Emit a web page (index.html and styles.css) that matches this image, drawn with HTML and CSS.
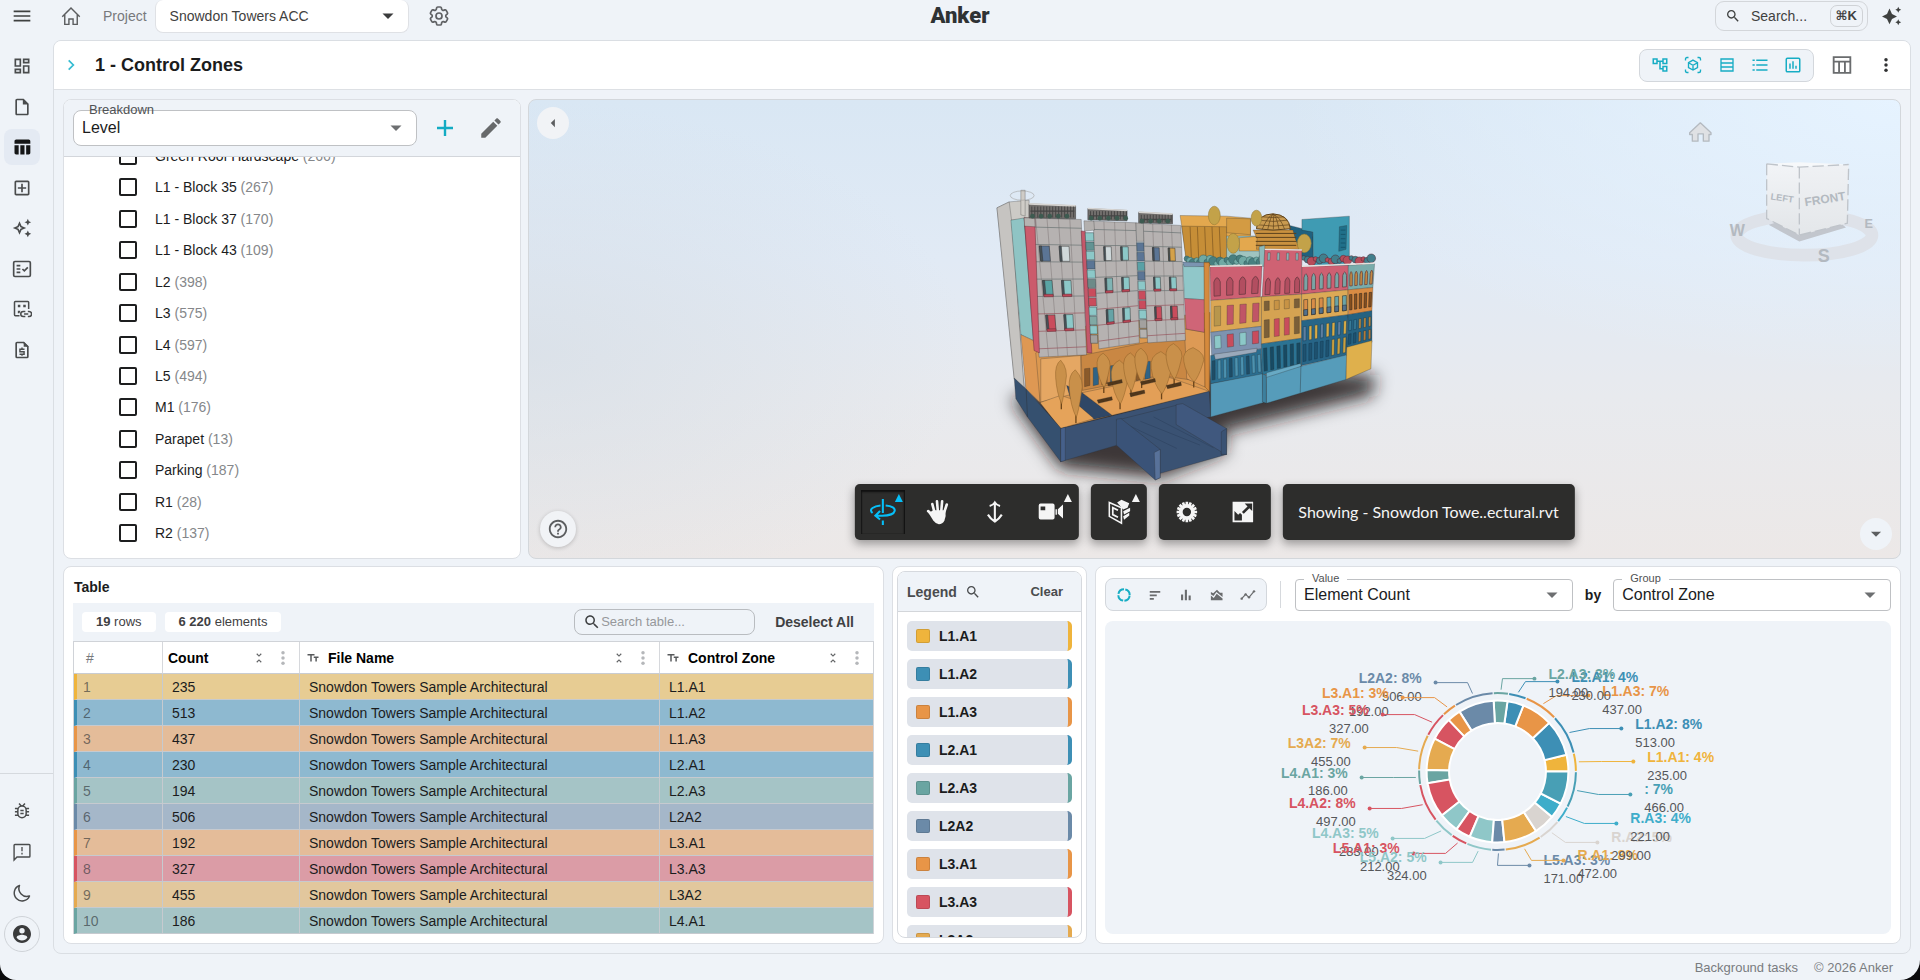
FILE: index.html
```html
<!DOCTYPE html>
<html lang="en">
<head>
<meta charset="utf-8">
<meta name="viewport" content="width=device-width, initial-scale=1">
<title>Anker - Control Zones</title>
<link rel="stylesheet" href="styles.css">
</head>
<body>
<svg class="sprite" aria-hidden="true">
  <symbol id="i-menu" viewBox="0 0 24 24"><path d="M2 18.500h20v-2H2zm0-5.500h20v-2H2zm0-7.500v2h20v-2z"/></symbol>
  <symbol id="i-home" viewBox="0 0 24 24"><path fill="none" stroke="currentColor" stroke-width="1.700" d="M1.500 13L12 2.500 22.500 13M4.500 10.500V22h5v-6.500h5V22h5V10.500"/></symbol>
  <symbol id="i-gear" viewBox="0 0 24 24"><g fill="none" stroke="currentColor" stroke-width="1.700"><path d="M9.594 3.940c.09-.542.56-.94 1.110-.94h2.593c.55 0 1.020.398 1.110.94l.213 1.281c.063.374.313.686.645.87.074.04.147.083.22.127.325.196.72.257 1.075.124l1.217-.456a1.125 1.125 0 0 1 1.370.49l1.296 2.247a1.125 1.125 0 0 1-.26 1.431l-1.003.827c-.293.241-.438.613-.43.992a7.723 7.723 0 0 1 0 .255c-.008.378.137.75.43.991l1.004.827c.424.35.534.955.26 1.430l-1.298 2.247a1.125 1.125 0 0 1-1.369.491l-1.217-.456c-.355-.133-.75-.072-1.076.124a6.470 6.470 0 0 1-.22.128c-.331.183-.581.495-.644.869l-.213 1.281c-.09.543-.56.94-1.110.94h-2.594c-.55 0-1.019-.398-1.110-.94l-.213-1.281c-.062-.374-.312-.686-.644-.87a6.520 6.520 0 0 1-.22-.127c-.325-.196-.72-.257-1.076-.124l-1.217.456a1.125 1.125 0 0 1-1.369-.49l-1.297-2.247a1.125 1.125 0 0 1 .26-1.431l1.004-.827c.292-.24.437-.613.43-.991a6.932 6.932 0 0 1 0-.255c.007-.38-.138-.751-.43-.992l-1.004-.827a1.125 1.125 0 0 1-.26-1.430l1.297-2.247a1.125 1.125 0 0 1 1.370-.491l1.216.456c.356.133.751.072 1.076-.124.072-.044.146-.086.22-.128.332-.183.582-.495.644-.869l.214-1.280Z"/><circle cx="12" cy="12" r="3"/></g></symbol>
  <symbol id="i-dash" viewBox="0 0 24 24"><path d="M19 5v2h-4V5h4M9 5v6H5V5h4m10 8v6h-4v-6h4M9 17v2H5v-2h4M21 3h-8v6h8V3zM11 3H3v10h8V3zm10 8h-8v10h8V11zm-10 4H3v6h8v-6z"/></symbol>
  <symbol id="i-file" viewBox="0 0 24 24"><path d="M14 2H6c-1.100 0-2 .9-2 2v16c0 1.100.9 2 2 2h12c1.100 0 2-.9 2-2V8l-6-6zM6 20V4h7v5h5v11H6z"/></symbol>
  <symbol id="i-table" viewBox="0 0 24 24"><path d="M10 10h5v11h-5zM17 21h3c1.100 0 2-.9 2-2v-9h-5v11zm3-18H5c-1.100 0-2 .9-2 2v3h19V5c0-1.100-.9-2-2-2zM3 19c0 1.100.9 2 2 2h3V10H3v9z"/></symbol>
  <symbol id="i-addbox" viewBox="0 0 24 24"><path d="M19 3H5c-1.100 0-2 .9-2 2v14c0 1.100.9 2 2 2h14c1.100 0 2-.9 2-2V5c0-1.100-.9-2-2-2zm0 16H5V5h14v14zm-8-2h2v-4h4v-2h-4V7h-2v4H7v2h4z"/></symbol>
  <symbol id="i-spark-o" viewBox="0 0 24 24"><path fill-rule="evenodd" d="M19 9l1.250-2.750L23 5l-2.750-1.250L19 1l-1.250 2.750L15 5l2.750 1.250zm-7.500.5L9 4 6.500 9.500 1 12l5.500 2.500L9 20l2.500-5.500L17 12zM10 13l-1 2.200L8 13l-2.200-1L8 11l1-2.200 1 2.200 2.200 1zM19 15l-1.250 2.750L15 19l2.750 1.250L19 23l1.250-2.750L23 19l-2.750-1.250z"/></symbol>
  <symbol id="i-spark" viewBox="0 0 24 24"><path d="M19.500 8l1.100-2.400L23 4.500l-2.400-1.100L19.500 1l-1.100 2.400L16 4.500l2.400 1.100zM12 9.500L9 3 6 9.500 0 12.500l6 3L9 22l3-6.500 6-3zM19.500 16l-1.100 2.400-2.400 1.100 2.400 1.100 1.100 2.400 1.100-2.400 2.400-1.100-2.400-1.100z"/></symbol>
  <symbol id="i-check" viewBox="0 0 24 24"><g fill="none" stroke="currentColor" stroke-width="2"><rect x="2" y="3" width="20" height="18" rx="1.500"/><path d="M5.500 8H10M5.500 12H10M5.500 16H10" /><path d="M12.500 12l2.300 2.300L19 10"/></g></symbol>
  <symbol id="i-link" viewBox="0 0 24 24"><g fill="none" stroke="currentColor" stroke-width="1.800"><path d="M9 20H4q-1 0-1-1V4q0-1 1-1h15q1 0 1 1v8"/><path d="M16 15h-2.500a3 3 0 0 0 0 6H16M19 15h1.500a3 3 0 0 1 0 6H19M14.500 18h5"/></g><path d="M7 7h3v3H7zM13.500 7h3v3h-3zM7 14h3l-1 3H7z"/></symbol>
  <symbol id="i-money" viewBox="0 0 24 24"><path fill="none" stroke="currentColor" stroke-width="2" d="M14 3H6q-1 0-1 1v16q0 1 1 1h12q1 0 1-1V8z"/><path d="M14 2l6 6h-6z"/><path fill="none" stroke="currentColor" stroke-width="1.700" d="M15 11H9.500v3h5v3H9M12 9v2M12 17v2"/></symbol>
  <symbol id="i-bug" viewBox="0 0 24 24"><g fill="none" stroke="currentColor" stroke-width="1.800"><path d="M7 11a5 5 0 0 1 10 0v4a5 5 0 0 1-10 0zM8.500 3l2.500 3M15.500 3L13 6M3.500 9H7M3.500 13H7M3.500 17H7M17 9h3.500M17 13h3.500M17 17h3.500M10 11.500h4M10 15h4"/></g></symbol>
  <symbol id="i-feedback" viewBox="0 0 24 24"><path fill="none" stroke="currentColor" stroke-width="1.700" d="M2.500 21.500V4q0-1 1-1h17q1 0 1 1v13q0 1-1 1H6z"/><path d="M11.200 6h1.600v5h-1.600zM11.200 13h1.600v2h-1.600z"/></symbol>
  <symbol id="i-moon" viewBox="0 0 24 24"><path fill="none" stroke="currentColor" stroke-width="1.800" stroke-linejoin="round" d="M9 3a9.500 9.500 0 1 0 12 12.500A9.500 9.500 0 0 1 9 3z"/></symbol>
  <symbol id="i-user" viewBox="0 0 24 24"><path d="M12 0C5.400 0 0 5.400 0 12s5.400 12 12 12 12-5.400 12-12S18.600 0 12 0zm0 4a3.600 3.600 0 1 1 0 7.200A3.600 3.600 0 0 1 12 4zm0 16.600c-3 0-5.700-1.500-7.200-3.900 0-2.400 4.800-3.700 7.200-3.700s7.200 1.300 7.200 3.700c-1.500 2.400-4.200 3.900-7.200 3.900z"/></symbol>
  <symbol id="i-search" viewBox="0 0 24 24"><path d="M15.500 14h-.79l-.28-.27C15.410 12.590 16 11.110 16 9.500 16 5.910 13.090 3 9.500 3S3 5.910 3 9.500 5.910 16 9.500 16c1.610 0 3.090-.59 4.230-1.570l.27.28v.79l5 4.990L20.490 19l-4.990-5zm-6 0C7.010 14 5 11.990 5 9.500S7.010 5 9.500 5 14 7.010 14 9.500 11.990 14 9.500 14z"/></symbol>
  <symbol id="i-tree" viewBox="0 0 24 24"><path d="M22 11V3h-7v3H9V3H2v8h7V8h2v10h4v3h7v-8h-7v3h-2V8h2v3h7zM7 9H4V5h3v4zm10 6h3v4h-3v-4zm0-10h3v4h-3V5z"/></symbol>
  <symbol id="i-cube" viewBox="0 0 24 24"><g fill="none" stroke="currentColor" stroke-width="1.800"><path d="M2 6V4q0-2 2-2h2M18 2h2q2 0 2 2v2M22 18v2q0 2-2 2h-2M6 22H4q-2 0-2-2v-2M12 5.500l6 3.300v6.600l-6 3.300-6-3.300V8.800zM6 9l6 3.300L18 9M12 12v6.500"/></g></symbol>
  <symbol id="i-rows" viewBox="0 0 24 24"><path fill="none" stroke="currentColor" stroke-width="2" d="M3 3h18v18H3zM3 9h18M3 15h18"/></symbol>
  <symbol id="i-list" viewBox="0 0 24 24"><path d="M2 4.500h3v2H2zM2 11h3v2H2zM2 17.500h3v2H2zM7 4.500h15v2H7zM7 11h15v2H7zM7 17.500h15v2H7z"/></symbol>
  <symbol id="i-chartbox" viewBox="0 0 24 24"><rect x="3" y="3" width="18" height="18" rx="1.500" fill="none" stroke="currentColor" stroke-width="2"/><path d="M7 10h2v7H7zM11 7h2v10h-2zM15 13h2v4h-2z"/></symbol>
  <symbol id="i-layout" viewBox="0 0 24 24"><path fill="none" stroke="currentColor" stroke-width="2.200" d="M2 2.500h20v19H2zM2 8h20M8.500 8v13.500M15.500 8v13.500"/></symbol>
  <symbol id="i-dots" viewBox="0 0 24 24"><circle cx="12" cy="4" r="2.600"/><circle cx="12" cy="12" r="2.600"/><circle cx="12" cy="20" r="2.600"/></symbol>
  <symbol id="i-chev" viewBox="0 0 24 24"><path fill="none" stroke="currentColor" stroke-width="3" d="M8 4l8 8-8 8"/></symbol>
  <symbol id="i-plus" viewBox="0 0 24 24"><path d="M13.200 4v6.800H20v2.400h-6.800V20h-2.400v-6.800H4v-2.400h6.800V4z"/></symbol>
  <symbol id="i-edit" viewBox="0 0 24 24"><path d="M3 17.250V21h3.750L17.810 9.940l-3.750-3.750L3 17.250zM20.710 7.040c.39-.39.39-1.020 0-1.410l-2.340-2.340c-.39-.39-1.020-.39-1.410 0l-1.830 1.830 3.750 3.750 1.830-1.830z"/></symbol>
  <symbol id="i-help" viewBox="0 0 24 24"><path d="M11 18h2v-2h-2v2zm1-16C6.480 2 2 6.480 2 12s4.480 10 10 10 10-4.480 10-10S17.520 2 12 2zm0 18c-4.410 0-8-3.590-8-8s3.590-8 8-8 8 3.590 8 8-3.590 8-8 8zm0-14c-2.210 0-4 1.790-4 4h2c0-1.100.9-2 2-2s2 .9 2 2c0 2-3 1.750-3 5h2c0-2.250 3-2.500 3-5 0-2.210-1.790-4-4-4z"/></symbol>
  <symbol id="i-down" viewBox="0 0 24 24"><path d="M6.500 9.500L12 15l5.500-5.500z"/></symbol>
  <symbol id="i-left" viewBox="0 0 24 24"><path d="M14.500 6.500L9 12l5.500 5.500z"/></symbol>
  <symbol id="i-sort" viewBox="0 0 24 24"><path d="M7.410 18.590L8.830 20 12 16.830 15.170 20l1.410-1.410L12 14l-4.590 4.590zm9.180-13.180L15.170 4 12 7.170 8.830 4 7.410 5.410 12 10l4.590-4.590z"/></symbol>
  <symbol id="i-text" viewBox="0 0 24 24"><path d="M1 4v3h5.500v12h3V7H15V4zm22 5h-9.500v3h3.200v7h3v-7H23z"/></symbol>
  <symbol id="i-donut" viewBox="0 0 24 24"><circle cx="12" cy="12" r="8.500" fill="none" stroke="currentColor" stroke-width="3" stroke-dasharray="11.350 2" stroke-dashoffset="-1"/></symbol>
  <symbol id="i-hbars" viewBox="0 0 24 24"><path d="M3 5h18v3.200H3zM3 11h12v3.200H3zM3 17h7v3.200H3z"/></symbol>
  <symbol id="i-vbars" viewBox="0 0 24 24"><path d="M3.500 11h3.600v10H3.500zM10 3h3.600v18H10zM16.500 13h3.600v8h-3.600z"/></symbol>
  <symbol id="i-area" viewBox="0 0 24 24"><path d="M1.500 13l5 4 5-7 10 8v3h-20zM1.500 7l4 2L12 3l5 5h4.500v7.500L11 7l-5 6.500-4.500-3z"/></symbol>
  <symbol id="i-line" viewBox="0 0 24 24"><path fill="none" stroke="currentColor" stroke-width="1.800" d="M2.500 17.500l6-6.500 5 4.500L21 6.500"/><circle cx="2.500" cy="17.500" r="1.800"/><circle cx="8.500" cy="11" r="1.800"/><circle cx="13.500" cy="15.500" r="1.800"/><circle cx="21" cy="6.500" r="1.800"/></symbol>
  <symbol id="i-orbit" viewBox="0 0 30 30"><g fill="none" stroke="currentColor" stroke-width="2.200"><path d="M15 1v15M15 24v5M4 16C-1 12 6 8.500 12.500 8M18 8c14 1 13 11-4 11H8M12 14l-5 5 5 4"/></g></symbol>
  <symbol id="i-hand" viewBox="0 0 30 30"><g fill="none" stroke="currentColor" stroke-width="2.800" stroke-linecap="round"><path d="M10.500 16L8 6.500M14 15L13 3.500M17.500 15l1-11.500M20.500 16l3-9M9 19l-5.500-5"/></g><path d="M9 13h13q1 6-1 11-2 4-6 4-3 0-6-4l-5-8z"/></symbol>
  <symbol id="i-pan" viewBox="0 0 30 30"><path fill="none" stroke="currentColor" stroke-width="2.400" d="M15 4v22M9 8q4-1 6-4 2 3 6 4M7 18q3 5 8 8 5-3 8-8"/></symbol>
  <symbol id="i-cam" viewBox="0 0 30 30"><path fill-rule="evenodd" d="M4 6h13q2 0 2 2v13q0 2-2 2H4q-2 0-2-2V8q0-2 2-2zm0 3v4h5V9zM20 12h1.500v6H20zM22.500 12L28 7v15l-5.500-5z"/></symbol>
  <symbol id="i-section" viewBox="0 0 30 30"><path d="M13 4l5-3 9 4-2 5-5 2zM20 14l8-4v4l-7 4zM20 20l7-4v3l-6 5z"/><path fill="none" stroke="currentColor" stroke-width="1.800" d="M4 4l14 6v18L4 20z"/><path fill="none" stroke="currentColor" stroke-width="2" d="M14 13l-6-3v8l6 3"/></symbol>
  <symbol id="i-cog" viewBox="0 0 30 30"><circle cx="15" cy="15" r="6.500" fill="none" stroke="currentColor" stroke-width="4"/><path fill="none" stroke="currentColor" stroke-width="2.800" d="M15 4v4M15 22v4M4 15h4M22 15h4M7.200 7.200l3 3M19.800 19.800l3 3M22.800 7.200l-3 3M10.200 19.800l-3 3M10.800 4.800l1.500 3.700M17.700 21.500l1.500 3.700M19.200 4.800l-1.500 3.700M12.300 21.500l-1.500 3.700M4.800 10.800l3.700 1.500M21.500 17.700l3.700 1.500M25.200 10.800l-3.700 1.500M8.500 17.700l-3.700 1.500" /></symbol>
  <symbol id="i-expand" viewBox="0 0 30 30"><path fill-rule="evenodd" d="M4 4h22v22H4zm2 10v10h8v-6l-2-2-2 2zM17 6l3 3-6 6 2 2 6-6 3 3V6z"/></symbol>
</svg>

<div class="app">
  <header class="topbar">
    <button class="icon-btn" aria-label="Menu"><svg class="s20"><use href="#i-menu"/></svg></button>
    <a class="home" href="#home" aria-label="Home"><svg class="s20"><use href="#i-home"/></svg></a>
    <label class="project-label" for="project">Project</label>
    <div class="select project">
      <select id="project"><option>Snowdon Towers ACC</option></select>
      <svg class="s24 caret dark"><use href="#i-down"/></svg>
    </div>
    <button class="icon-btn gear" aria-label="Project settings"><svg class="s24"><use href="#i-gear"/></svg></button>
    <div class="logo">Anker</div>
    <button class="search"><svg class="s16"><use href="#i-search"/></svg><span>Search...</span><kbd>⌘K</kbd></button>
    <button class="icon-btn assist" aria-label="Assistant"><svg class="s20"><use href="#i-spark"/></svg></button>
  </header>

  <div class="body">
    <nav class="side" aria-label="Main">
      <div class="side-top">
        <button class="nav" aria-label="Dashboard"><svg class="s20"><use href="#i-dash"/></svg></button>
        <button class="nav" aria-label="Files"><svg class="s20"><use href="#i-file"/></svg></button>
        <button class="nav active" aria-label="Views"><svg class="s20"><use href="#i-table"/></svg></button>
        <button class="nav" aria-label="Add"><svg class="s20"><use href="#i-addbox"/></svg></button>
        <button class="nav" aria-label="AI tools"><svg class="s20"><use href="#i-spark-o"/></svg></button>
        <button class="nav" aria-label="Checks"><svg class="s20"><use href="#i-check"/></svg></button>
        <button class="nav" aria-label="Linked data"><svg class="s20"><use href="#i-link"/></svg></button>
        <button class="nav" aria-label="Costs"><svg class="s20"><use href="#i-money"/></svg></button>
      </div>
      <div class="side-bottom">
        <button class="nav" aria-label="Report a bug"><svg class="s20"><use href="#i-bug"/></svg></button>
        <button class="nav" aria-label="Feedback"><svg class="s20"><use href="#i-feedback"/></svg></button>
        <button class="nav" aria-label="Dark mode"><svg class="s20"><use href="#i-moon"/></svg></button>
        <button class="nav avatar" aria-label="Account"><svg class="s18"><use href="#i-user"/></svg></button>
      </div>
    </nav>

    <main class="main">
      <div class="page-head">
        <button class="icon-btn expand" aria-label="Expand"><svg class="s14"><use href="#i-chev"/></svg></button>
        <h1>1 - Control Zones</h1>
        <div class="toggles head-toggles">
          <button aria-label="Tree"><svg class="s18"><use href="#i-tree"/></svg></button>
          <button aria-label="Model"><svg class="s18"><use href="#i-cube"/></svg></button>
          <button aria-label="Table"><svg class="s16"><use href="#i-rows"/></svg></button>
          <button aria-label="Legend"><svg class="s18"><use href="#i-list"/></svg></button>
          <button aria-label="Chart"><svg class="s18"><use href="#i-chartbox"/></svg></button>
        </div>
        <button class="icon-btn layout" aria-label="Layout"><svg class="s20"><use href="#i-layout"/></svg></button>
        <button class="icon-btn more" aria-label="More"><svg class="s16"><use href="#i-dots"/></svg></button>
      </div>

      <div class="content">
        <div class="row row-top">
          <section class="panel breakdown">
            <div class="bd-head">
              <div class="select outlined bd-select">
                <label for="bd">Breakdown</label>
                <select id="bd"><option>Level</option></select>
                <svg class="s24 caret"><use href="#i-down"/></svg>
              </div>
              <button class="icon-btn add" aria-label="Add breakdown"><svg class="s24"><use href="#i-plus"/></svg></button>
              <button class="icon-btn edit" aria-label="Edit breakdown"><svg class="s26"><use href="#i-edit"/></svg></button>
            </div>
            <div class="bd-clip">
              <div class="bd-list">
                <label><input type="checkbox"><span>Green Roof Hardscape <i>(266)</i></span></label>
                <label><input type="checkbox"><span>L1 - Block 35 <i>(267)</i></span></label>
                <label><input type="checkbox"><span>L1 - Block 37 <i>(170)</i></span></label>
                <label><input type="checkbox"><span>L1 - Block 43 <i>(109)</i></span></label>
                <label><input type="checkbox"><span>L2 <i>(398)</i></span></label>
                <label><input type="checkbox"><span>L3 <i>(575)</i></span></label>
                <label><input type="checkbox"><span>L4 <i>(597)</i></span></label>
                <label><input type="checkbox"><span>L5 <i>(494)</i></span></label>
                <label><input type="checkbox"><span>M1 <i>(176)</i></span></label>
                <label><input type="checkbox"><span>Parapet <i>(13)</i></span></label>
                <label><input type="checkbox"><span>Parking <i>(187)</i></span></label>
                <label><input type="checkbox"><span>R1 <i>(28)</i></span></label>
                <label><input type="checkbox"><span>R2 <i>(137)</i></span></label>
              </div>
            </div>
          </section>

          <section class="viewer" aria-label="3D model">
            <svg class="model" id="model" viewBox="0 0 1373 460"></svg>
            <svg class="viewcube" viewBox="255 360 600 440" aria-label="View cube">
              <path d="M301 371l32 30v5h-6v20h-17v-22h-16v22h-17v-20h-8v-5z" fill="#dfe1e4" stroke="#b4bac0" stroke-width="4" stroke-linejoin="round"/>
              <ellipse cx="613" cy="708" rx="203" ry="60" fill="none" stroke="#dee2e9" stroke-width="38"/>
              <path d="M506 677l92 50 140-42-12-10-120 20-80-24z" fill="#c2c6cd"/>
              <path d="M500 494l98 10v204l-98-50z" fill="url(#cubeA)"/>
              <path d="M598 504l148-8-4 176-144 36z" fill="url(#cubeB)"/>
              <path d="M500 494l98-5 148 7-148 8z" fill="#f6f8fa"/>
              <path d="M500 494l98 10 148-8M500 494v164l98 50 144-36 4-176M598 504v204" fill="none" stroke="#bfc4ca" stroke-width="4" stroke-dasharray="34 12"/>
              <defs>
                <linearGradient id="cubeA" x1="0" y1="0" x2="0" y2="1"><stop offset="0" stop-color="#f2f4f7"/><stop offset="1" stop-color="#e2e5e8"/></linearGradient>
                <linearGradient id="cubeB" x1="0" y1="0" x2="0" y2="1"><stop offset="0" stop-color="#eff1f4"/><stop offset="1" stop-color="#e4e7ea"/></linearGradient>
              </defs>
              <g class="cube-text">
                <text x="546" y="606" font-size="28" transform="rotate(8 546 600)">LEFT</text>
                <text x="675" y="612" font-size="36" transform="rotate(-9 675 600)">FRONT</text>
                <text x="412" y="710" font-size="48">W</text>
                <text x="671" y="790" font-size="54">S</text>
                <text x="806" y="686" font-size="38">E</text>
              </g>
            </svg>
            <button class="round back" aria-label="Collapse panel"><svg class="s18"><use href="#i-left"/></svg></button>
            <button class="round help" aria-label="Help"><svg class="s22"><use href="#i-help"/></svg></button>
            <button class="round down" aria-label="Collapse viewer"><svg class="s22"><use href="#i-down"/></svg></button>
            <div class="vtools">
              <div class="vgroup">
                <button class="on tri" aria-label="Orbit"><svg class="s28"><use href="#i-orbit"/></svg></button>
                <button aria-label="Pan"><svg class="s28"><use href="#i-hand"/></svg></button>
                <button aria-label="Dolly"><svg class="s26"><use href="#i-pan"/></svg></button>
                <button class="tri" aria-label="Camera"><svg class="s28"><use href="#i-cam"/></svg></button>
              </div>
              <div class="vgroup"><button class="tri" aria-label="Section"><svg class="s26"><use href="#i-section"/></svg></button></div>
              <div class="vgroup">
                <button aria-label="Settings"><svg class="s28"><use href="#i-cog"/></svg></button>
                <button aria-label="Full screen"><svg class="s28"><use href="#i-expand"/></svg></button>
              </div>
              <div class="vgroup vlabel">Showing - Snowdon Towe..ectural.rvt</div>
            </div>
          </section>
        </div>

        <div class="row row-bottom">
          <section class="panel table-panel">
            <h2>Table</h2>
            <div class="tbar">
              <span class="chip"><b>19</b> rows</span>
              <span class="chip"><b>6 220</b> elements</span>
              <label class="tsearch"><svg class="s18"><use href="#i-search"/></svg><input type="text" placeholder="Search table..." aria-label="Search table"></label>
              <button class="deselect">Deselect All</button>
            </div>
            <div class="tclip">
              <table>
                <colgroup><col class="c-num"><col class="c-count"><col><col class="c-zone"></colgroup>
                <thead><tr>
                  <th class="num">#</th>
                  <th><div class="th"><span>Count</span><svg class="s14 so"><use href="#i-sort"/></svg><svg class="s16 do"><use href="#i-dots"/></svg></div></th>
                  <th><div class="th"><svg class="s12"><use href="#i-text"/></svg><span>File Name</span><svg class="s14 so"><use href="#i-sort"/></svg><svg class="s16 do"><use href="#i-dots"/></svg></div></th>
                  <th><div class="th"><svg class="s12"><use href="#i-text"/></svg><span>Control Zone</span><svg class="s14 so"><use href="#i-sort"/></svg><svg class="s16 do"><use href="#i-dots"/></svg></div></th>
                </tr></thead>
                <tbody>
                  <tr class="amber"><td>1</td><td>235</td><td>Snowdon Towers Sample Architectural</td><td>L1.A1</td></tr>
                  <tr class="blue"><td>2</td><td>513</td><td>Snowdon Towers Sample Architectural</td><td>L1.A2</td></tr>
                  <tr class="orange"><td>3</td><td>437</td><td>Snowdon Towers Sample Architectural</td><td>L1.A3</td></tr>
                  <tr class="blue"><td>4</td><td>230</td><td>Snowdon Towers Sample Architectural</td><td>L2.A1</td></tr>
                  <tr class="sage"><td>5</td><td>194</td><td>Snowdon Towers Sample Architectural</td><td>L2.A3</td></tr>
                  <tr class="slate"><td>6</td><td>506</td><td>Snowdon Towers Sample Architectural</td><td>L2A2</td></tr>
                  <tr class="orange"><td>7</td><td>192</td><td>Snowdon Towers Sample Architectural</td><td>L3.A1</td></tr>
                  <tr class="red"><td>8</td><td>327</td><td>Snowdon Towers Sample Architectural</td><td>L3.A3</td></tr>
                  <tr class="gold"><td>9</td><td>455</td><td>Snowdon Towers Sample Architectural</td><td>L3A2</td></tr>
                  <tr class="sage"><td>10</td><td>186</td><td>Snowdon Towers Sample Architectural</td><td>L4.A1</td></tr>
                </tbody>
              </table>
            </div>
          </section>

          <section class="panel legend-panel">
            <div class="legend">
              <div class="legend-head"><h2>Legend</h2><svg class="s16"><use href="#i-search"/></svg><button>Clear</button></div>
              <div class="legend-list">
                <button class="amber">L1.A1</button>
                <button class="blue">L1.A2</button>
                <button class="orange">L1.A3</button>
                <button class="blue">L2.A1</button>
                <button class="sage">L2.A3</button>
                <button class="slate">L2A2</button>
                <button class="orange">L3.A1</button>
                <button class="red">L3.A3</button>
                <button class="gold">L3A2</button>
              </div>
            </div>
          </section>

          <section class="panel chart-panel">
            <div class="chart-bar">
              <div class="toggles chart-toggles">
                <button class="sel" aria-label="Donut"><svg class="s16"><use href="#i-donut"/></svg></button>
                <button aria-label="Bars"><svg class="s14"><use href="#i-hbars"/></svg></button>
                <button aria-label="Columns"><svg class="s14"><use href="#i-vbars"/></svg></button>
                <button aria-label="Area"><svg class="s14"><use href="#i-area"/></svg></button>
                <button aria-label="Line"><svg class="s16"><use href="#i-line"/></svg></button>
              </div>
              <span class="divider"></span>
              <div class="select outlined grow">
                <label for="val">Value</label>
                <select id="val"><option>Element Count</option></select>
                <svg class="s24 caret"><use href="#i-down"/></svg>
              </div>
              <b class="by">by</b>
              <div class="select outlined grow">
                <label for="grp">Group</label>
                <select id="grp"><option>Control Zone</option></select>
                <svg class="s24 caret"><use href="#i-down"/></svg>
              </div>
            </div>
            <div class="chart-area"><svg id="donut" viewBox="-393 -150 787 312"></svg></div>
          </section>
        </div>
      </div>
    </main>
  </div>

  <footer class="foot"><a href="#tasks">Background tasks</a><span>© 2026 Anker</span></footer>
</div>
<script src="app.js"></script>
</body>
</html>
```
FILE: styles.css
```css
* { box-sizing: border-box; }
html, body { height: 100%; margin: 0; }
body {
  background: #0b0b0d;
  color: #1b1c1d;
  font: 14px/20px "Liberation Sans", Arial, sans-serif;
}
button, select, input { font: inherit; color: inherit; }
button { background: none; border: 0; padding: 0; cursor: pointer; }
h1, h2 { margin: 0; }
a { color: inherit; text-decoration: none; }
svg { display: block; fill: currentColor; flex: none; }
.sprite { position: absolute; width: 0; height: 0; }
.s12 { width: 12px; height: 12px; }
.s14 { width: 14px; height: 14px; }
.s16 { width: 16px; height: 16px; }
.s18 { width: 18px; height: 18px; }
.s20 { width: 20px; height: 20px; }
.s22 { width: 22px; height: 22px; }
.s24 { width: 24px; height: 24px; }
.s26 { width: 26px; height: 26px; }
.s28 { width: 28px; height: 28px; }

.amber { --c: #efb43c; }
.blue { --c: #3d8fb5; }
.orange { --c: #e89547; }
.sage { --c: #6aa5a2; }
.slate { --c: #6b8aa8; }
.red { --c: #d75461; }
.gold { --c: #e5aa50; }

.app {
  display: flex;
  flex-direction: column;
  height: 100vh;
  min-height: 720px;
  background: #eff3f8;
  border-radius: 0 0 20px 16px;
  overflow: hidden;
}

/* top bar */
.topbar {
  position: relative;
  display: flex;
  align-items: center;
  height: 32px;
  padding: 0 18px 0 12px;
  color: #3f4140;
}
.home { margin-left: 29px; color: #5b5d5f; }
.icon-btn { display: grid; place-items: center; }
.project-label { margin-left: 22px; color: #77797c; }
.select { position: relative; }
.select select {
  appearance: none;
  width: 100%;
  height: 100%;
  border: 0;
  background: none;
  outline: 0;
}
.caret { position: absolute; right: 8px; top: 50%; margin-top: -12px; color: #6d6f71; pointer-events: none; }
.caret.dark { color: #3a3b3c; }
.project {
  width: 254px;
  height: 33px;
  margin-left: 8px;
  background: #fff;
  border: 1px solid #dfe1e5;
  border-top: 0;
  border-radius: 8px;
}
.project select { padding: 0 14px; }
.gear { margin-left: 18px; color: #606265; }
.logo {
  position: absolute;
  left: 50%;
  top: 0;
  transform: translateX(-50%);
  font: 900 22px/32px Roboto, sans-serif;
  color: #2e3234;
}
.search {
  display: flex;
  align-items: center;
  gap: 10px;
  width: 153px;
  height: 30px;
  margin-left: auto;
  padding: 0 4px 0 9px;
  border: 1px solid #d3d6da;
  border-radius: 9px;
}
.search kbd {
  margin-left: auto;
  padding: 0 5px;
  border: 1px solid #cfd2d6;
  border-radius: 7px;
  font: bold 13px/20px "Liberation Sans", "DejaVu Sans", sans-serif;
}
.assist { margin-left: 14px; }

/* side navigation */
.body { flex: 1; display: flex; min-height: 0; padding-right: 9px; }
.side { display: flex; flex-direction: column; justify-content: space-between; width: 53px; }
.side-top, .side-bottom { display: flex; flex-direction: column; justify-content: space-between; padding-left: 4px; }
.side-top { height: 320px; margin-top: 16px; }
.side-bottom { height: 179px; border-top: 1px solid #d5d9de; padding-top: 19px; margin-bottom: 2px; }
.nav { display: grid; place-items: center; width: 36px; height: 36px; border-radius: 8px; color: #4a4c4d; }
.nav.active { background: #e4eaf3; color: #151617; }
.nav.avatar { border: 1px solid #cfd3d8; border-radius: 50%; color: #3a3b3c; }

/* page */
.main {
  flex: 1;
  min-width: 0;
  display: flex;
  flex-direction: column;
  margin-top: 8px;
  border: 1px solid #dadee3;
  border-radius: 8px;
  overflow: hidden;
}
.page-head {
  display: flex;
  align-items: center;
  height: 49px;
  padding: 0 16px 0 10px;
  background: #fff;
  border-bottom: 1px solid #dde0e4;
}
.expand { color: #35bcd2; }
h1 { margin-left: 17px; font-size: 18px; line-height: 24px; }
.toggles { display: flex; border: 1px solid #d3d7dc; border-radius: 8px; background: #eff3f8; }
.toggles button { display: grid; place-items: center; flex: 1; }
.head-toggles { width: 175px; height: 33px; margin-left: auto; padding: 0 3px; color: #17adc4; }
.layout { margin-left: 18px; color: #6a6c6e; }
.more { margin-left: 26px; color: #303132; }
.content { flex: 1; min-height: 0; display: flex; flex-direction: column; gap: 7px; padding: 9px; }
.row { display: grid; gap: 7px; min-height: 0; }
.row-top { flex: 460; grid-template-columns: minmax(0, 458fr) minmax(0, 1373fr); }
.row-bottom { flex: 378; gap: 8px; grid-template-columns: minmax(0, 821fr) 195px minmax(0, 806fr); }
.panel {
  display: flex;
  flex-direction: column;
  min-width: 0;
  min-height: 0;
  background: #fff;
  border: 1px solid #dcdfe4;
  border-radius: 8px;
  overflow: hidden;
}

/* breakdown */
.bd-head {
  display: flex;
  align-items: center;
  height: 57px;
  padding: 0 16px 0 9px;
  background: #eff3f8;
  border-bottom: 1px solid #d3d6db;
}
.outlined { border: 1px solid #bfc1c4; background: #fff; }
.outlined select { font-size: 16px; }
.outlined label { position: absolute; z-index: 1; background: #fff; color: #505254; }
.bd-select { flex: 1; height: 36px; border-radius: 8px; }
.bd-select select { padding: 0 8px; }
.bd-select label { left: 9px; top: -9px; padding-left: 6px; font-size: 13px; line-height: 16px; background: none; }
.add { margin-left: 16px; color: #12abc3; }
.edit { margin-left: 21px; color: #67696b; }
.bd-clip { flex: 1; min-height: 0; overflow: hidden; display: flex; flex-direction: column; }
.bd-list { flex: 1; margin: -17px 0 9px; display: flex; flex-direction: column; }
.bd-list label { flex: 1; display: flex; align-items: center; padding-left: 55px; }
.bd-list input {
  appearance: none;
  width: 18px;
  height: 18px;
  margin: 0 18px 0 0;
  border: 2px solid #1d1e1f;
  border-radius: 2px;
}
.bd-list i { font-style: normal; color: #85878a; }

/* viewer */
.viewer {
  position: relative;
  overflow: hidden;
  border: 1px solid #d3d7db;
  border-radius: 8px;
  background:
    radial-gradient(ellipse 45% 60% at 100% 0, #e6f3ff 0, rgba(230, 243, 255, 0) 100%),
    radial-gradient(ellipse 32% 55% at 0 55%, rgba(212, 220, 228, .6) 0, rgba(212, 220, 228, 0) 100%),
    linear-gradient(180deg, #d9e7f4 0, #e1eaf5 35%, #e8eaee 65%, #ece8e7 100%);
}
.model { position: absolute; inset: 0; width: 100%; height: 100%; }
.viewcube { position: absolute; right: 15px; top: 19px; width: 200px; height: 147px; }
.cube-text { fill: #b3b9c0; font-family: "Liberation Sans", Arial, sans-serif; font-weight: bold; text-anchor: middle; }
.round { position: absolute; display: grid; place-items: center; width: 32px; height: 32px; border-radius: 50%; background: #f1f3f6; color: #5c5e60; }
.back { left: 8px; top: 7px; }
.help { left: 11px; bottom: 11px; width: 36px; height: 36px; box-shadow: 0 1px 4px rgba(0, 0, 0, .2); }
.down { right: 8px; bottom: 8px; background: #eff3f8; }
.vtools { position: absolute; left: 50%; bottom: 18px; transform: translateX(-50%); display: flex; gap: 12px; }
.vgroup {
  display: flex;
  height: 56px;
  border-radius: 5px;
  background: #2d2d2c;
  color: #f5f5f5;
  box-shadow: 0 4px 10px rgba(0, 0, 0, .35);
}
.vgroup button { position: relative; display: grid; place-items: center; width: 56px; }
.vgroup .on { width: 44px; margin: 6px; color: #06bff8; box-shadow: inset 0 2px 2px #101010, inset 1px 0 1px #161616, inset -1px 0 1px #161616; }
.tri::after {
  content: "";
  position: absolute;
  right: 7px;
  top: 10px;
  border: 4px solid transparent;
  border-top: 0;
  border-bottom: 8px solid currentColor;
}
.on.tri::after { right: 2px; top: 4px; }
.vlabel { align-items: center; padding: 0 16px; font: 16px/20px Lato, sans-serif; white-space: nowrap; }

/* table */
.table-panel { padding: 0 9px 9px; }
.table-panel h2 { padding: 10px 0 6px 1px; font-size: 14px; line-height: 20px; }
.tbar { display: flex; align-items: center; gap: 9px; height: 38px; padding: 0 20px 0 9px; background: #eff3f8; color: #3f4143; }
.chip { padding: 0 14px; background: #fff; border-radius: 4px; font-size: 13px; line-height: 20px; white-space: nowrap; }
.tsearch {
  display: flex;
  align-items: center;
  width: 181px;
  height: 26px;
  margin-left: auto;
  padding-left: 8px;
  border: 1px solid #b9bcc0;
  border-radius: 8px;
}
.tsearch input { width: 100%; min-width: 0; border: 0; padding: 0; background: none; outline: 0; font-size: 13px; }
.tsearch input::placeholder { color: #96989b; }
.deselect { margin-left: 11px; font-weight: bold; }
.tclip { flex: 1; min-height: 0; overflow: hidden; border: 1px solid #d0d3d8; border-bottom: 0; }
table { width: 100%; table-layout: fixed; border-collapse: separate; border-spacing: 0; }
.c-num { width: 89px; }
.c-count { width: 137px; }
.c-zone { width: 213px; }
th { height: 32px; padding: 0 8px 0 5px; border-right: 1px solid #d6d8dc; border-bottom: 1px solid #c9ccd1; color: #000; text-align: left; }
th.num { padding-left: 12px; font-weight: normal; color: #77797c; }
.th { display: flex; align-items: center; }
.th .s12 { margin: 0 9px 0 2px; color: #57595b; }
.th .so { margin-left: auto; color: #626466; }
.th .do { margin-left: 9px; color: #b5b7ba; }
td {
  height: 26px;
  padding: 0 9px;
  background: color-mix(in srgb, var(--c) 50%, #dfe3ea);
  border-right: 1px solid #c6cacf;
  border-bottom: 1px solid #c6cacf;
  white-space: nowrap;
}
td:first-child { border-left: 3px solid var(--c); padding-left: 6px; color: rgba(40, 44, 48, .6); }
th:last-child, td:last-child { border-right: 0; }

/* legend */
.legend-panel { padding: 4px 4px 5px; }
.legend { flex: 1; min-height: 0; border: 1px solid #d6d9de; border-radius: 8px; overflow: hidden; }
.legend-head { display: flex; align-items: center; gap: 8px; height: 40px; padding: 0 18px 0 9px; background: #eff3f8; border-bottom: 1px solid #d3d6da; color: #4a4c4e; }
.legend-head h2 { font-size: 14px; }
.legend-head button { margin-left: auto; font-weight: bold; font-size: 13px; }
.legend-list { display: flex; flex-direction: column; gap: 8px; padding: 9px; }
.legend-list button {
  display: flex;
  align-items: center;
  gap: 9px;
  height: 30px;
  padding-left: 9px;
  border-right: 4px solid var(--c);
  border-radius: 5px;
  background: #dfe3ea;
  font-weight: bold;
}
.legend-list button::before { content: ""; width: 14px; height: 14px; border-radius: 2px; background: var(--c); box-shadow: inset 0 0 0 1px rgba(0, 0, 0, .12); }

/* chart */
.chart-panel { padding: 11px 9px 9px; overflow: visible; }
.chart-bar { display: flex; align-items: center; height: 33px; }
.chart-toggles { width: 162px; height: 33px; padding: 0 2px; color: #6a6c6e; }
.chart-toggles .sel { color: #17adc4; }
.divider { width: 1px; height: 27px; margin: 0 14px 0 13px; background: #d6d9dd; }
.grow { flex: 1; height: 32px; border-radius: 4px; }
.grow select { padding: 0 8px; }
.grow label { left: 8px; top: -10px; padding: 0 8px; font-size: 11px; line-height: 16px; }
.by { margin: 0 12px; }
.chart-area { flex: 1; min-height: 0; margin-top: 10px; border-radius: 8px; background: #eff3f8; }
.chart-area svg { width: 100%; height: 100%; }
.chart-area text { font-family: "Liberation Sans", Arial, sans-serif; font-size: 13px; fill: #55575a; }
.chart-area .title { font-size: 14px; font-weight: bold; }
.chart-area .end { text-anchor: end; }

.foot { display: flex; justify-content: flex-end; align-items: center; gap: 16px; height: 26px; padding: 1px 27px 0 0; font-size: 13px; line-height: 16px; color: #797c80; }
```
FILE: app.js
```js
const NS = "http://www.w3.org/2000/svg";

function add(parent, tag, attrs, text) {
  const el = document.createElementNS(NS, tag);
  for (const k in attrs) el.setAttribute(k, attrs[k]);
  if (text) el.textContent = text;
  parent.appendChild(el);
  return el;
}

/* ---------- donut: name, count, colour, label dot ---------- */
const zones = [
  ["L1.A1", 235, "#efb43c", 136, -10],
  ["L1.A2", 513, "#3d8fb5", 124, -43],
  ["L1.A3", 437, "#e89547", 91, -76],
  ["L2.A1", 230, "#3d8fb5", 60, -90],
  ["L2.A3", 194, "#6aa5a2", 37, -93],
  ["L2A2", 506, "#6b8aa8", -62, -89],
  ["L3.A1", 192, "#e89547", -95, -74],
  ["L3.A3", 327, "#d75461", -115, -57],
  ["L3A2", 455, "#e5aa50", -133, -24],
  ["L4.A1", 186, "#6aa5a2", -136, 6],
  ["L4.A2", 497, "#d75461", -128, 37],
  ["L4.A3", 283, "#8fc7c8", -105, 67],
  ["L5.A1", 212, "#d75461", -84, 82],
  ["L5.A2", 324, "#8fc7c8", -57, 91],
  ["L5.A3", 171, "#6b8aa8", 32, 94],
  ["R.A1", 472, "#e5aa50", 66, 89],
  ["R.A2", 299, "#d9d4d0", 100, 71],
  ["R.A3", 221, "#3eadca", 119, 52],
  ["", 466, "#489fb5", 133, 23]
];
const total = zones.reduce((s, z) => s + z[1], 0);
const donut = document.getElementById("donut");
const polar = (r, a) => `${(r * Math.cos(a)).toFixed(2)} ${(-r * Math.sin(a)).toFixed(2)}`;

function arc(r0, r1, a0, a1) {
  return `M${polar(r1, a0)}A${r1} ${r1} 0 0 0 ${polar(r1, a1)}L${polar(r0, a1)}A${r0} ${r0} 0 0 1 ${polar(r0, a0)}Z`;
}

let angle = 0;
for (const [name, count, color, x, y] of zones) {
  const next = angle + (count / total) * Math.PI * 2;
  const mid = (angle + next) / 2;
  const side = x < 0 ? -1 : 1;
  add(donut, "path", { d: arc(48.5, 71, angle, next), fill: color, stroke: "#fff", "stroke-width": 2 });
  add(donut, "path", { d: arc(77.5, 79.5, angle + 0.008, next - 0.008), fill: color });
  add(donut, "path", { d: `M${polar(82, mid)}L${x - side * 32} ${y}H${x}`, fill: "none", stroke: color });
  add(donut, "circle", { cx: x, cy: y, r: 2, fill: color });
  const cls = side < 0 ? " end" : "";
  add(donut, "text", { x: x + side * 14, y: y, class: "title" + cls, style: `fill:${color}` }, `${name}: ${Math.round(count / total * 100)}%`);
  add(donut, "text", { x: x + side * 14, y: y + 18, class: cls.trim() }, count.toFixed(2));
  angle = next;
}

/* ---------- building model ---------- */
const model = document.getElementById("model");
const defs = add(model, "defs", {});
const blur = add(defs, "filter", { id: "soft", x: "-30%", y: "-60%", width: "160%", height: "220%" });
add(blur, "feGaussianBlur", { stdDeviation: 26 });
const g = add(model, "g", { transform: "translate(432 70) scale(.3333)", "stroke-linejoin": "round" });

const INK = "rgba(40,40,40,.55)";
const poly = (pts, fill, stroke = INK, w = 1.5) => add(g, "polygon", { points: pts, fill, stroke, "stroke-width": w });
const line = (d, stroke = INK, w = 2) => add(g, "path", { d, fill: "none", stroke, "stroke-width": w });

/* maps u,v in 0..1 onto a four-cornered wall given as tl, tr, br, bl */
function wall(c) {
  const at = (u, v) => [0, 1].map(i =>
    ((c[i] * (1 - u) + c[2 + i] * u) * (1 - v) + (c[6 + i] * (1 - u) + c[4 + i] * u) * v).toFixed(1)).join(",");
  return {
    fill: (color) => poly([at(0, 0), at(1, 0), at(1, 1), at(0, 1)].join(" "), color),
    box: (u, v, w, h, color, s) => poly([at(u, v), at(u + w, v), at(u + w, v + h), at(u, v + h)].join(" "), color, s),
    arch: (u, v, w, h, color) => add(g, "path", {
      d: `M${at(u, v + h)}L${at(u, v + h * .25)}Q${at(u + w / 2, v - h * .2)} ${at(u + w, v + h * .25)}L${at(u + w, v + h)}Z`,
      fill: color, stroke: "#59333a", "stroke-width": 2 }),
    seg: (u0, v0, u1, v1, s, w) => line(`M${at(u0, v0)}L${at(u1, v1)}`, s, w)
  };
}

const shade = add(g, "g", { filter: "url(#soft)" });
add(shade, "polygon", { points: "150,690 300,900 600,930 800,850 790,790 1240,680 1250,620 1100,610 400,620", fill: "#1d1a19", opacity: .85 });

/* roof terraces behind the facades */
poly("660,138 800,140 872,146 872,200 800,275 680,275", "#e3a84e");
poly("665,170 800,172 800,290 680,290", "#c68e37");
for (let i = 1; i < 6; i++) line(`M${668 + i * 22} 172l4 98`, "#7a5320");
poly("800,146 872,148 872,196 800,190", "#d39b43");
poly("800,200 905,200 905,290 800,290", "#9fc4c0");
poly("838,205 905,200 905,245 838,245", "#e3a84e");
poly("990,168 1060,186 1062,290 990,240", "#20617e");
poly("1027,150 1170,140 1170,290 1062,290 1060,188 1027,182", "#3f9bb3");
poly("1140,172 1162,168 1160,240 1138,246", "#20708a");
for (let i = 0; i < 5; i++) line(`M1144 ${182 + i * 13}h14`, "#124a5e");
poly("880,182 1000,182 1008,210 1020,240 890,240 892,208", "#c9913f");
for (let i = 0; i < 4; i++) line(`M888 ${192 + i * 12}L1010 ${192 + i * 12}`, "#5c421c", 3);
add(g, "path", { d: "M890 178Q892 134 940 133Q988 136 992 178Q940 186 890 178Z", fill: "#c99a50", stroke: "#5c421c", "stroke-width": 3 });
for (let i = 1; i < 6; i++) line(`M${890 + i * 17} 180Q${915 + i * 9} 140 940 134`, "#5c421c", 2);
line("M894 166Q940 174 990 166M898 152Q940 160 984 152M910 142Q940 147 972 142", "#5c421c", 2);
[[763, 138, 18, 28], [820, 222, 19, 30], [890, 146, 16, 24], [1034, 222, 21, 28]].forEach(([x, y, a, b]) =>
  add(g, "ellipse", { cx: x, cy: y, rx: a, ry: b, fill: "#c3a249", stroke: "#8e7430", "stroke-width": 1.5 }));
for (let i = 0; i < 24; i++)
  add(g, "circle", { cx: 680 + i * 10, cy: 268 + (i * 7) % 16, r: 8 + (i % 3) * 3, fill: i % 2 ? "#6fa9a4" : "#487f80", stroke: "#305c5c", "stroke-width": 1.5 });
for (let i = 0; i < 18; i++)
  add(g, "circle", { cx: 1032 + i * 12, cy: 266 + (i * 5) % 12, r: 7 + (i % 3) * 3, fill: i % 4 > 1 ? "#b74c5a" : "#417f8c", stroke: "#4f2730", "stroke-width": 1.5 });

/* side of the tower */
poly("108,115 145,97 205,92 205,150 152,152 190,660 160,630", "#cccac6");
poly("145,97 152,152 190,660 160,630 108,115", "#c6c4c1");
poly("180,62 193,62 193,140 180,136", "#cfccc7");
add(g, "ellipse", { cx: 184, cy: 78, rx: 36, ry: 14, fill: "none", stroke: "#9a9894", "stroke-width": 1.5 });
poly("150,152 192,145 192,172 218,515 180,497", "#8fc4c4");
poly("192,170 222,170 238,552 222,550", "#cb5b6c");
poly("180,497 218,515 238,552 238,702 195,660", "#de9853");

/* courtyard */
poly("225,552 300,480 750,430 748,670 455,740 300,780 238,700", "#db9850");
poly("240,570 360,560 362,670 240,700", "#e5a763");
poly("362,560 560,520 735,480 735,640 600,620 365,665", "#c98743");
for (let i = 0; i < 9; i++) poly(`${372 + i * 26},${600 - i * 3} ${388 + i * 26},${598 - i * 3} ${388 + i * 26},${650 - i * 3} ${372 + i * 26},${654 - i * 3}`, i % 2 ? "#2f6386" : "#8b5a2a");
poly("673,480 735,490 735,655 680,630", "#dd9a55");
poly("318,650 365,672 455,740 400,752 330,690", "#2f4766");
poly("365,672 610,620 748,668 455,740", "#e39f57");
poly("238,702 300,680 330,690 400,750 300,780", "#e5a35a");
[[300, 640, 15, 66], [344, 675, 18, 72], [428, 605, 18, 52], [477, 640, 24, 66], [510, 610, 20, 58], [542, 590, 18, 52], [602, 612, 29, 64], [640, 578, 22, 54], [699, 588, 28, 52]].forEach(([x, y, a, b]) => {
  line(`M${x + 2} ${y}V${y + b + 16}`, "#6b4419", 4);
  add(g, "path", { d: `M${x} ${y - b}Q${x + a * 1.6} ${y - b * .6} ${x + a} ${y}Q${x + a * .6} ${y + b * .7} ${x + 3} ${y + b}Q${x - a * .8} ${y + b * .5} ${x - a} ${y - b * .2}Q${x - a * 1.2} ${y - b * .8} ${x} ${y - b}Z`, fill: "#c9904a", stroke: "#8d5f26", "stroke-width": 1.5 });
});
[[410, 700], [508, 680], [618, 656], [440, 648], [540, 645]].forEach(([x, y]) => poly(`${x},${y - 6} ${x + 44},${y - 16} ${x + 46},${y - 6} ${x + 4},${y + 4}`, "#50361a"));

/* plinth and ramp */
poly("160,628 195,660 300,778 300,880 200,745 165,690", "#35506f");
poly("300,780 455,742 748,668 752,745 648,765 470,830 300,880", "#3b5273");
poly("300,780 314,776 314,876 300,880", "#46608a");
line("M196 662L200 745");
poly("468,755 648,710 800,858 600,915", "#3a5273");
line("M500 768L650 840M540 758L720 830M580 745L760 838", "#2a3f5c", 1.5);
poly("648,708 668,705 800,780 800,858 784,858 784,850 648,768", "#40587e");
poly("784,790 800,780 800,858 784,858", "#3a5273");
poly("468,752 482,750 600,843 600,928 585,935 468,830", "#3a5378");
poly("582,852 600,843 600,928 585,935", "#58729a");

/* grey facades */
function greyWall(c, cols, wins, glass) {
  const w = wall(c);
  w.fill("#b6b2b1");
  for (let i = 1; i < cols; i++) w.seg(i / cols, 0, i / cols, 1, "#7d7675", 1.5);
  for (const v of [.065, .19, .315, .44, .565, .69, .815, .94]) w.seg(0, v, 1, v, v > .6 ? "#94505a" : "#657070", 2);
  [.2, .45, .7].forEach((v, r) => wins.forEach((u, k) => {
    const color = glass[(r * wins.length + k) % glass.length];
    w.box(u, v, .18, .11, color, "#333");
    w.box(u, v, .04, .11, "#47535a", "#333");
    if (r) w.box(u, v + .1, .18, .018, "#bd4656", "#5b2b33");
  }));
}
const cyan = "#8cc8c8", navy = "#5b7595", rose = "#c94c5c";
greyWall([190, 145, 362, 150, 378, 558, 235, 565], 5, [.22, .58], [navy, "#cfd8da", "#5aa4a4", cyan, rose, cyan]);
poly("190,145 222,148 236,552 220,545", "#cb5b6c", "#6b2d38");
poly("190,145 222,146 223,172 191,170", "#b6b3b1");
poly("362,185 374,186 394,552 380,552", "#c4586a", "#6b2d38");
const stack = [cyan, "#629393", cyan, navy, cyan, "#6d8a88", rose, rose, cyan, "#80a9a4", cyan, "#a3a19f"];
stack.forEach((color, i) => poly(`${374 + i * 1.4},${190 + i * 28} ${400 + i * 1},${190 + i * 28} ${401 + i * 1},${215 + i * 28} ${375 + i * 1.4},${215 + i * 28}`, color, "#3a4a4c"));
greyWall([398, 155, 527, 160, 537, 522, 415, 540], 4, [.22, .62], ["#cfd8da", cyan, "#7fb4b4", cyan, "#66a3a6", cyan]);
poly("370,154 400,155 402,182 372,185", "#b3b0ae");
[navy, navy, "#59a1a6", navy, cyan, rose, rose, cyan, "#a3a19f", "#b5b2b0"].forEach((color, i) =>
  poly(`${529 + i},${220 + i * 29} ${551 + i},${220 + i * 29} ${552 + i},${246 + i * 29} ${530 + i},${246 + i * 29}`, color, "#3a4a4c"));
poly("527,160 550,162 551,216 529,216", "#b0adab");
greyWall([549, 162, 662, 168, 676, 514, 562, 522], 4, [.22, .64], [navy, "#d4a149", cyan, cyan, rose, rose]);

/* grey roof terraces */
[[205, 103, 345, 148], [382, 117, 500, 154], [535, 128, 637, 163]].forEach(([a, b, c, d]) => {
  poly(`${a},${b} ${c},${b + 6} ${c},${d} ${a},${d - 3}`, "#716e6c", "#2c2b2b");
  line(`M${a} ${b}L${c} ${b + 6}`, "#d7d5d2", 5);
  for (let x = a + 8; x < c; x += 9) line(`M${x} ${b + 8}V${d - 4}`, "#333", 2);
  line(`M${a + 4} ${b + 22}H${c - 4}`, "#444", 4);
  for (let x = a + 10; x < c; x += 26) add(g, "circle", { cx: x, cy: d - 8, r: 7, fill: "#3d5a50" });
});

/* corner */
poly("668,285 735,292 733,392 673,388", "#90c7c9");
poly("668,278 735,280 748,292 672,292", "#7b94b1");
poly("673,388 733,392 733,490 678,480", "#cf6577");
poly("732,280 748,280 748,668 735,655", "#d58a3d", "#7a4b1a");

/* street front */
function bays(c, color, n, draw) {
  const w = wall(c);
  w.fill(color);
  for (let i = 0; i < n; i++) draw(w, (i + .28) / n, .5 / n, i);
}
bays([750, 292, 907, 290, 902, 383, 752, 394], "#cd6072", 4, (w, u, d) => w.arch(u, .32, d, .56, "#b24e60"));
bays([752, 394, 907, 383, 905, 472, 752, 490], "#dba754", 4, (w, u, d, i) => w.box(u, .2, d, .62, i ? "#c05566" : "#b8964c"));
bays([752, 490, 905, 472, 905, 540, 755, 560], "#7d93b0", 4, (w, u, d, i) => w.box(u, .18, d, .55, i % 2 ? rose : cyan));
bays([752, 560, 905, 540, 908, 618, 752, 645], "#2b6e90", 9, (w, u, d, i) => w.box(u, .2, d, .68, i % 3 ? "#4b92b0" : "#1d4d68"));
poly("762,556 892,538 890,550 766,572", "#9aa9bb");
poly("898,232 915,228 917,292 900,290", "#8cbabb");
bays([915, 240, 1027, 242, 1026, 375, 907, 383], "#cf6273", 4, (w, u, d) => { w.arch(u, .6, d, .36, "#b24e60"); w.box(u + .02, .07, d * .5, .16, "#8fb0b4"); });
bays([905, 383, 1026, 375, 1026, 508, 905, 525], "#d5a352", 4, (w, u, d, i) => { w.box(u, .5, d, .38, i % 3 ? rose : "#7b5f38"); w.box(u, .1, d, .2, i % 3 ? "#c79345" : "#7b5f38"); });
bays([905, 525, 1026, 508, 1026, 592, 908, 618], "#2b7393", 6, (w, u, d) => w.box(u, .15, d, .75, "#174a63"));
bays([1027, 292, 1167, 288, 1166, 362, 1026, 375], "#cd6072", 6, (w, u, d) => w.arch(u, .25, d, .62, "#7aa5a6"));
bays([1167, 288, 1246, 283, 1241, 355, 1167, 362], "#79acab", 5, (w, u, d) => w.arch(u, .25, d, .6, "#c48b43"));
bays([1026, 375, 1166, 362, 1166, 437, 1026, 455], "#dca956", 6, (w, u, d, i) => { w.box(u, .22, d, .6, i < 3 ? "#d98d48" : "#6aa4a7", "#222"); w.box(u, .6, d, .22, "#53718c", "#222"); });
bays([1166, 362, 1241, 355, 1238, 425, 1167, 437], "#d98b43", 5, (w, u, d) => w.box(u, .2, d, .62, "#87501f", "#222"));
bays([1026, 455, 1166, 437, 1162, 560, 1026, 590], "#276587", 8, (w, u, d, i) => {
  w.box(u, .14, d, .32, i % 3 ? "#d8ab45" : "#5d7fa0", "#143b52");
  w.box(u, .54, d, .38, i > 4 ? "#c99e3d" : "#1e5270", "#143b52");
});
bays([1166, 437, 1238, 425, 1238, 520, 1162, 540], "#256281", 5, (w, u, d, i) => { w.box(u, .18, d, .3, i > 1 ? "#b4863f" : "#387d9a", "#143b52"); w.box(u, .58, d, .3, i > 1 ? "#b27a38" : "#1e5270", "#143b52"); });
poly("752,645 908,615 910,702 752,745", "#5499b8");
poly("908,615 920,620 920,704 908,700", "#3d7f9d");
poly("920,618 1162,558 1160,632 920,704", "#569cba");
poly("920,612 1022,584 1026,592 920,626", "#68aac5");
line("M1024 590L1022 672");
poly("1162,535 1238,515 1235,600 1160,632", "#dfb04c");
line("M750 291L907 288M915 240L1027 242M1027 291L1246 282", "#e6dfdc", 4);
```
